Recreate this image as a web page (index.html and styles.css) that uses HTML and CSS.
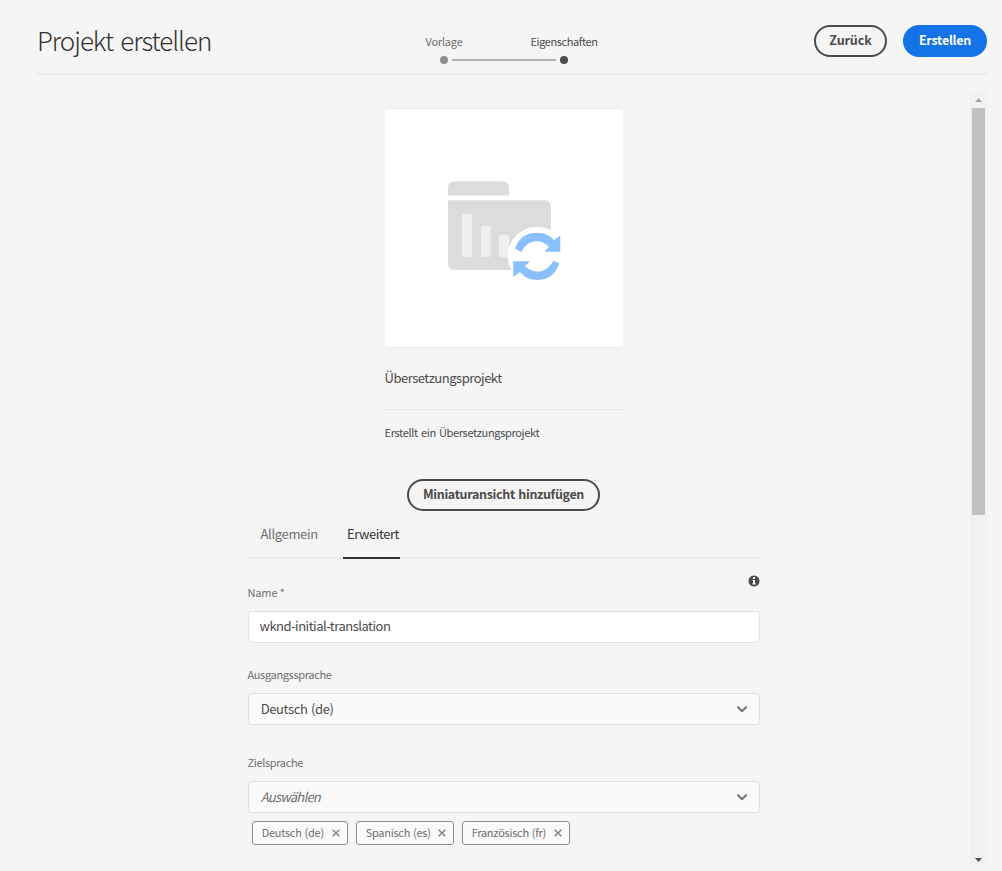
FILE: index.html
```html
<!DOCTYPE html>
<html lang="de">
<head>
<meta charset="utf-8">
<title>Projekt erstellen</title>
<link rel="stylesheet" href="styles.css">
</head>
<body>
<header class="header">
  <h1 class="title"><span>Projekt erstellen</span></h1>
  <ol class="steps">
    <li class="step"><span class="step-label">Vorlage</span><i class="dot"></i></li>
    <li class="step current"><span class="step-label">Eigenschaften</span><i class="dot"></i></li>
  </ol>
  <div class="actions">
    <button class="btn btn-back"><span>Zurück</span></button>
    <button class="btn btn-create"><span>Erstellen</span></button>
  </div>
</header>
<div class="body">
  <main class="content">
    <section class="project">
      <div class="thumb">
        <svg width="124" height="112" viewBox="0 0 124 112">
          <path fill="#dcdcdc" d="M3 19.500V12Q3 5.300 10 5.300H57Q64 5.300 64 12V19.500Z"/>
          <path fill="#dcdcdc" d="M3 24.300H99Q106 24.300 106 31V94H10Q3 94 3 87Z"/>
          <g fill="#efefef"><rect x="17" y="38" width="10" height="43" rx="1.500"/><rect x="36" y="50" width="9.500" height="31" rx="1.500"/><rect x="54" y="59" width="10" height="22" rx="1.500"/></g>
          <circle cx="92" cy="80" r="29.300" fill="#fff"/>
          <g fill="#89c0fc">
            <path d="M70 72.500C74 61 82 56.700 92 56.700C99 56.700 105 59.500 109 64L115.300 59.500V75.700H99.300L104 70.800C95 62 82 64 76.500 76Z"/>
            <path d="M114.300 87.500C110 99 103 104 92 104C85 104 79 101 75 96L68.300 101V85.200H85L80 90C89 99 102 97 108.300 84.700Z"/>
          </g>
        </svg>
      </div>
      <h2 class="name"><span>Übersetzungsprojekt</span></h2>
      <p class="desc"><span>Erstellt ein Übersetzungsprojekt</span></p>
    </section>
    <button class="btn btn-thumb"><span>Miniaturansicht hinzufügen</span></button>
    <nav class="tabs">
      <a class="tab tab-a"><span>Allgemein</span></a>
      <a class="tab tab-b"><span>Erweitert</span></a>
    </nav>
    <form class="form">
      <svg class="info" width="12" height="12" viewBox="0 0 12 12"><circle cx="6" cy="6" r="5.500" fill="#4b4b4b"/><path fill="#f5f5f5" d="M5 2h2v2H5zM4.500 5H7v3.300h.8v1.100H4.300V8.300H5V6h-.5z"/></svg>
      <label class="label l-name"><span>Name *</span></label>
      <div class="field input"><span>wknd-initial-translation</span></div>
      <label class="label l-source"><span>Ausgangssprache</span></label>
      <div class="field select"><span>Deutsch (de)</span><svg width="10" height="7" viewBox="0 0 10 7"><path d="M1 1.200l4 4 4-4"/></svg></div>
      <label class="label l-target"><span>Zielsprache</span></label>
      <div class="field select placeholder"><span>Auswählen</span><svg width="10" height="7" viewBox="0 0 10 7"><path d="M1 1.200l4 4 4-4"/></svg></div>
      <div class="tags">
        <div class="tag tag-de"><span>Deutsch (de)</span><svg width="8" height="8" viewBox="0 0 8 8"><path d="M.7.700l6.600 6.600M7.300.700L.7 7.300"/></svg></div>
        <div class="tag tag-es"><span>Spanisch (es)</span><svg width="8" height="8" viewBox="0 0 8 8"><path d="M.7.700l6.600 6.600M7.300.700L.7 7.300"/></svg></div>
        <div class="tag tag-fr"><span>Französisch (fr)</span><svg width="8" height="8" viewBox="0 0 8 8"><path d="M.7.700l6.600 6.600M7.300.700L.7 7.300"/></svg></div>
      </div>
    </form>
  </main>
  <div class="scrollbar">
    <svg width="17" height="17" viewBox="0 0 17 17"><path fill="#a3a3a3" d="M5 11h7L8.500 7z"/></svg>
    <div class="handle"></div>
    <svg class="down" width="17" height="17" viewBox="0 0 17 17"><path fill="#505050" d="M5 10h7l-3.500 4z"/></svg>
  </div>
</div>
</body>
</html>
```
FILE: styles.css
```css
* { box-sizing: border-box; }
body {
  margin: 0;
  height: 871px;
  overflow: hidden;
  background: #f5f5f5;
  color: #4b4b4b;
  font: 13px/20px "Noto Sans CJK SC", "Noto Sans", sans-serif;
}
h1, h2, p, ol { margin: 0; padding: 0; font-weight: 400; }
span { white-space: nowrap; }
svg { display: block; flex: none; }

.header {
  display: grid;
  grid-template-columns: 347px 240px 1fr;
  height: 75px;
  margin: 0 15px 0 37px;
  border-bottom: 2px solid #eaeaea;
}
.title { padding-top: 21px; font-size: 26px; line-height: 38px; font-weight: 300; letter-spacing: -1.050px; word-spacing: 2.500px; color: #323232; }
.steps { display: flex; list-style: none; padding-top: 31px; }
.step {
  position: relative;
  width: 120px;
  display: flex;
  flex-direction: column;
  align-items: center;
  font-size: 11px;
  letter-spacing: -0.200px;
  color: #6e6e6e;
}
.step.current { color: #4b4b4b; letter-spacing: -0.400px; }
.dot { width: 8px; height: 8px; margin-top: 5px; border-radius: 50%; background: #8e8e8e; }
.current .dot { background: #4b4b4b; }
.current::before {
  content: "";
  position: absolute;
  left: -52px;
  top: 28px;
  width: 104px;
  height: 2px;
  background: #b3b3b3;
}
.actions { display: flex; justify-content: flex-end; gap: 16px; padding-top: 25px; }
.btn {
  display: flex;
  justify-content: center;
  align-items: center;
  height: 32px;
  padding: 0 0 2px;
  border: 2px solid #4b4b4b;
  border-radius: 16px;
  background: transparent;
  color: #4b4b4b;
  font: 700 12.500px/20px "Noto Sans CJK SC", sans-serif;
  letter-spacing: -0.250px;
}
.btn-back { width: 73px; letter-spacing: -0.100px; }
.btn-create { width: 84px; border-color: #1473e6; background: #1473e6; color: #fff; }
.btn-thumb { width: 193px; margin: 37px 0 0 159px; letter-spacing: -0.340px; word-spacing: 1px; }

.body { display: flex; padding: 16px 15px 6px 37px; height: 796px; }
.content { width: 512px; margin-left: 211px; padding-top: 17px; }
.project { width: 239px; margin-left: 137px; }
.thumb {
  width: 238px;
  height: 240px;
  padding: 67px 0 0 60px;
  border: solid #eaeaea;
  border-width: 1px 0;
  border-radius: 4px;
  background: #fff;
}
.name { height: 62px; padding-top: 20px; border-bottom: 1px solid #e6e6e6; font-size: 13px; letter-spacing: -0.480px; }
.name span, .desc span { margin-left: -0.500px; }
.desc { padding-top: 12px; font-size: 11px; letter-spacing: -0.340px; word-spacing: 1px; }

.tabs { display: flex; height: 48px; border-bottom: 2px solid #eaeaea; padding-left: 12.500px; }
.tab { height: 48px; padding-top: 13px; font-size: 13px; letter-spacing: -0.350px; color: #6e6e6e; }
.tab-a { width: 82.500px; }
.tab-b { width: 57px; padding-left: 4px; border-bottom: 2px solid #323232; letter-spacing: -0.450px; color: #323232; }

.form { display: flex; flex-direction: column; }
.info { align-self: flex-end; margin-top: 16px; }
.label { display: block; font-size: 11px; line-height: 20px; letter-spacing: -0.350px; color: #6e6e6e; }
.label span { margin-left: -0.500px; }
.l-name { margin: -5px 0 9px; letter-spacing: -0.150px; }
.l-source { margin: 21px 0 9px; }
.l-target { margin: 27px 0 9px; }
.field {
  display: flex;
  align-items: center;
  height: 32px;
  padding: 0 12px 1px 10.500px;
  border: 1px solid #e1e1e1;
  border-radius: 4px;
  background: #fff;
  letter-spacing: -0.380px;
  word-spacing: 1px;
}
.input { padding-bottom: 2px; letter-spacing: -0.500px; }
.select { justify-content: space-between; padding-left: 11.700px; background: #fafafa; }
.select svg { margin-top: 2px; fill: none; stroke: #6e6e6e; stroke-width: 2; stroke-linecap: round; }
.placeholder span { font-style: italic; letter-spacing: -0.750px; color: #6e6e6e; }
.tags { display: flex; gap: 8px; padding: 8px 4px; }
.tag {
  display: flex;
  align-items: center;
  justify-content: space-between;
  height: 24px;
  padding: 0 7px 0 8.700px;
  border: 1px solid #909090;
  border-radius: 3px;
  background: #fafafa;
  font-size: 11px;
  letter-spacing: -0.270px;
  word-spacing: 0.800px;
  color: #6e6e6e;
}
.tag span { margin-top: -2px; }
.tag svg { stroke: #808080; stroke-width: 1.400; }
.tag-de { width: 96px; }
.tag-es { width: 98px; }
.tag-fr { width: 108px; }

.scrollbar { display: flex; flex-direction: column; width: 17px; height: 774px; margin-left: auto; background: #f1f1f1; }
.handle { width: 13px; height: 407px; margin-left: 2px; background: #c1c1c1; }
.down { margin-top: auto; }
```
